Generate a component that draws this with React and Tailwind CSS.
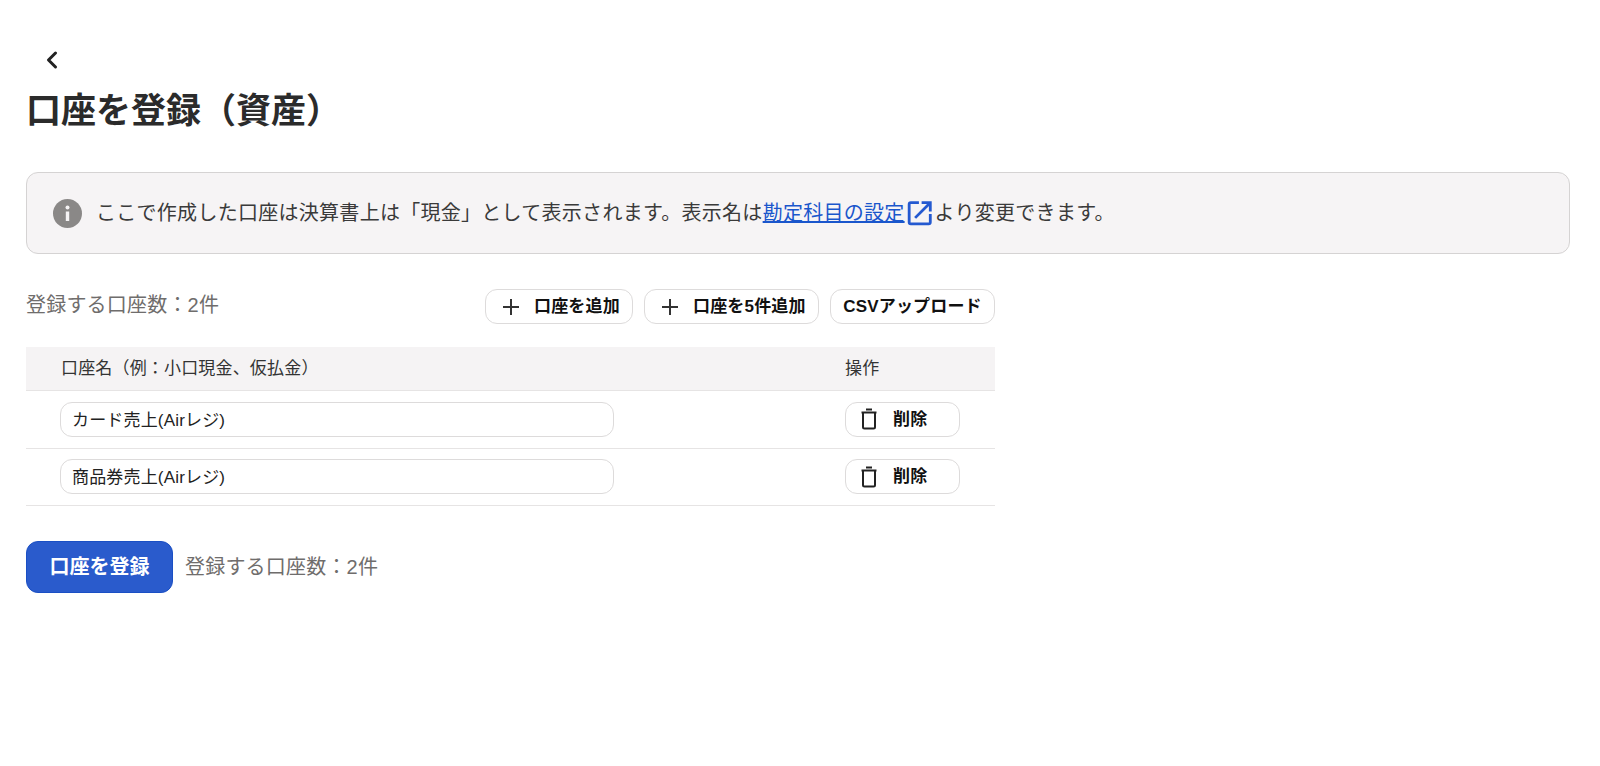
import React from 'react';
import { ChevronLeft } from 'lucide-react';

const font = 'font-["Liberation_Sans","Noto_Sans_CJK_JP",sans-serif]';

function OutlineButton({ children, className }) {
  return (
    <button className={`flex items-center h-[35px] rounded-[12px] border border-[#dddbdb] bg-white text-[17px] tracking-[0.01em] font-bold text-[#111] ${className}`}>
      {children}
    </button>
  );
}

function AccountRow({ name }) {
  return (
    <div className="flex items-center h-[57.5px] border-b border-[#e6e4e4]">
      <input
        readOnly
        value={name}
        className="ml-[34px] w-[554px] h-[35px] rounded-[12px] border border-[#dddbdb] pl-[11px] pr-[11px] pb-[2px] text-[17px] tracking-[0.01em] text-[#222] outline-none"
      />
      <OutlineButton className="ml-[231px] w-[115px] pl-[13px]">
        <TrashIcon />
        <span className="ml-[14px]">削除</span>
      </OutlineButton>
    </div>
  );
}

function TrashIcon() {
  return (
    <svg width="20" height="24" viewBox="0 0 20 24" fill="none" stroke="#222" strokeWidth="2">
      <path d="M2.5 5.5h15" />
      <path d="M7 2.5h6" />
      <path d="M4 6v14a1.5 1.5 0 0 0 1.5 1.5h9a1.5 1.5 0 0 0 1.5-1.5V6" />
    </svg>
  );
}

function PlusIcon() {
  return (
    <svg width="18" height="18" viewBox="0 0 18 18" fill="none" stroke="#333" strokeWidth="2" className="shrink-0">
      <path d="M9 1v16" />
      <path d="M1 9h16" />
    </svg>
  );
}

export default function App() {
  return (
    <div className={`${font} bg-white min-h-[766px] pt-[44px] pl-[26px] pr-[30px] text-[#333]`}>
      <button className="flex items-center justify-center w-[32px] h-[32px] ml-[10px] text-[#222]">
        <ChevronLeft size={28} strokeWidth={2.6} />
      </button>

      <h1 className="mt-[11px] text-[35px] leading-[48px] font-bold text-[#2b2b2b]">口座を登録（資産）</h1>

      <div className="mt-[37px] flex items-center h-[82px] px-[26px] rounded-[12px] border border-[#d5d3d3] bg-[#f6f4f5]">
        <svg width="29" height="29" viewBox="0 0 29 29" className="shrink-0">
          <circle cx="14.5" cy="14.5" r="14.5" fill="#8a8887" />
          <circle cx="14.5" cy="8.5" r="2" fill="#f5f3f4" />
          <rect x="12.8" y="12.5" width="3.4" height="9.5" fill="#f5f3f4" />
        </svg>
        <p className="ml-[14px] text-[20px] tracking-[0.014em] flex items-center text-[#3a3a3a]">
          ここで作成した口座は決算書上は「現金」として表示されます。表示名は
          <a className="text-[#1a56cc] underline">勘定科目の設定</a>
          <svg width="26" height="26" viewBox="0 0 24 24" fill="none" stroke="#2459d0" strokeWidth="2.6" className="mx-[2px]">
            <path d="M11 2.5H3.5a1.5 1.5 0 0 0-1.5 1.5v16.5a1.5 1.5 0 0 0 1.5 1.5H20a1.5 1.5 0 0 0 1.5-1.5V13" />
            <path d="M7.5 16.5L21 3" />
            <path d="M13.5 2.5h8v8" />
          </svg>
          より変更できます。
        </p>
      </div>

      <div className="w-[969px]">
        <div className="mt-[35px] flex items-start">
          <span className="mt-[1px] text-[20px] tracking-[0.01em] text-[#6f6d6c]">登録する口座数：2件</span>
          <div className="ml-auto flex gap-[11px]">
            <OutlineButton className="w-[148px] pl-[16px]">
              <PlusIcon />
              <span className="ml-[14px]">口座を追加</span>
            </OutlineButton>
            <OutlineButton className="w-[175px] pl-[16px]">
              <PlusIcon />
              <span className="ml-[14px]">口座を5件追加</span>
            </OutlineButton>
            <OutlineButton className="w-[165px] justify-center">CSVアップロード</OutlineButton>
          </div>
        </div>

        <div className="mt-[23px] flex items-center h-[44px] bg-[#f5f3f4] border-b border-[#e6e4e4] text-[17px] tracking-[0.01em] text-[#333]">
          <span className="ml-[35px] w-[784px]">口座名（例：小口現金、仮払金）</span>
          <span>操作</span>
        </div>
        <AccountRow name="カード売上(Airレジ)" />
        <AccountRow name="商品券売上(Airレジ)" />

        <div className="mt-[35px] flex items-center">
          <button className="w-[147px] h-[52px] rounded-[12px] bg-[#2a5bcc] border border-[#1a4fc4] text-[20px] font-bold text-white">
            口座を登録
          </button>
          <span className="ml-[12px] text-[20px] tracking-[0.01em] text-[#6f6d6c]">登録する口座数：2件</span>
        </div>
      </div>
    </div>
  );
}
